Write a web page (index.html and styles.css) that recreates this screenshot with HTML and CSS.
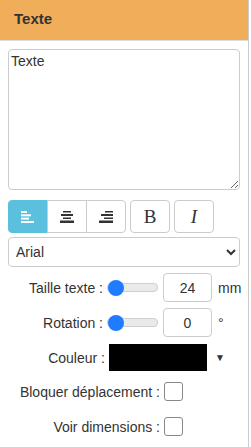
FILE: index.html
```html
<!DOCTYPE html>
<html lang="fr">
<head>
    <meta charset="UTF-8">
    <meta name="viewport" content="width=device-width, initial-scale=1.0">
    <title>Texte</title>
    <link rel="stylesheet" href="styles.css">
</head>
<body>
    <div class="panel">
        <div class="panel-heading">Texte</div>
        <div class="panel-body">
            <textarea class="text-input">Texte</textarea>

            <div class="toolbar">
                <div class="btn-group">
                    <button class="btn active" title="Gauche">
                        <svg width="14" height="12" viewBox="0 0 14 12">
                            <rect x="0" y="0" width="6" height="2" fill="#fff"/>
                            <rect x="0" y="3.3" width="10" height="2" fill="#fff"/>
                            <rect x="0" y="6.6" width="8" height="2" fill="#fff"/>
                            <rect x="0" y="10" width="13" height="2" fill="#fff"/>
                        </svg>
                    </button>
                    <button class="btn" title="Centre">
                        <svg width="14" height="12" viewBox="0 0 14 12">
                            <rect x="3" y="0" width="8" height="1.5" fill="#333"/>
                            <rect x="1" y="3" width="12" height="2" fill="#333"/>
                            <rect x="3" y="6.5" width="8" height="1.5" fill="#333"/>
                            <rect x="0" y="9.5" width="14" height="2.5" fill="#333"/>
                        </svg>
                    </button>
                    <button class="btn" title="Droite">
                        <svg width="14" height="12" viewBox="0 0 14 12">
                            <rect x="6" y="0" width="8" height="1.5" fill="#333"/>
                            <rect x="2" y="3" width="12" height="2" fill="#333"/>
                            <rect x="5" y="6.5" width="9" height="1.5" fill="#333"/>
                            <rect x="0" y="9.5" width="14" height="2.5" fill="#333"/>
                        </svg>
                    </button>
                </div>
                <button class="btn btn-font bold">B</button>
                <button class="btn btn-font italic">I</button>
            </div>

            <select class="font-select">
                <option>Arial</option>
                <option>Times New Roman</option>
                <option>Courier New</option>
            </select>

            <div class="row">
                <label>Taille texte :</label>
                <input type="range" class="slider" min="0" max="200" value="0">
                <input type="number" class="num" value="24">
                <span class="unit">mm</span>
            </div>
            <div class="row">
                <label>Rotation :</label>
                <input type="range" class="slider" min="0" max="360" value="0">
                <input type="number" class="num" value="0">
                <span class="unit">°</span>
            </div>
            <div class="row">
                <label>Couleur :</label>
                <div class="color-box"></div>
                <span class="unit arrow">▼</span>
            </div>
            <div class="row check-row">
                <label>Bloquer déplacement :</label>
                <input type="checkbox" class="check">
            </div>
            <div class="row check-row">
                <label>Voir dimensions :</label>
                <input type="checkbox" class="check">
            </div>
        </div>
    </div>
</body>
</html>
```

FILE: styles.css
```css
body {
    margin: 0;
    font-family: 'Liberation Sans', Arial, sans-serif;
    font-size: 14px;
    color: #333;
    background: white;
}

.panel {
    width: 248px;
    height: 447px;
    border-right: 1px solid #ccc;
}

.panel-heading {
    background: #f0ad5a;
    height: 40px;
    line-height: 38px;
    padding-left: 14px;
    font-size: 15px;
    font-weight: bold;
    color: #333;
    border-bottom: 1px solid #ddd;
}

.panel-body {
    padding: 8px 8px 0 8px;
}

.text-input {
    display: block;
    box-sizing: border-box;
    width: 232px;
    height: 141px;
    border: 1px solid #ccc;
    border-radius: 4px;
    padding: 3px 2px;
    font-family: 'Liberation Sans', Arial, sans-serif;
    font-size: 14px;
    color: #333;
    margin: 0;
}

.toolbar {
    display: flex;
    gap: 4px;
    margin-top: 10px;
}

.btn-group {
    display: flex;
}

.btn {
    box-sizing: border-box;
    width: 40px;
    height: 33px;
    border: 1px solid #ccc;
    border-radius: 4px;
    background: white;
    display: flex;
    align-items: center;
    justify-content: center;
    padding: 0;
    color: #333;
}

.btn-group .btn {
    border-radius: 0;
    margin-left: -1px;
}

.btn-group .btn:first-child {
    margin-left: 0;
    border-radius: 4px 0 0 4px;
}

.btn-group .btn:last-child {
    border-radius: 0 4px 4px 0;
}

.btn.active {
    background: #5bc0de;
    border-color: #5bc0de;
}

.btn-font {
    font-family: 'Liberation Serif', 'Times New Roman', serif;
    font-size: 19px;
}

.btn-font.italic {
    font-style: italic;
}

.font-select {
    display: block;
    box-sizing: border-box;
    width: 232px;
    height: 30px;
    margin-top: 4px;
    border: 1px solid #ccc;
    border-radius: 4px;
    background: white;
    font-family: 'Liberation Sans', Arial, sans-serif;
    font-size: 14px;
    color: #333;
    padding-left: 3px;
}

.row {
    display: flex;
    align-items: center;
    justify-content: flex-end;
    height: 29px;
    margin-top: 6px;
}

.row label {
    margin-right: 4px;
}

.slider {
    -webkit-appearance: none;
    appearance: none;
    width: 49px;
    height: 7px;
    margin: 0 5px 0 0;
    background: #eaeaea;
    border: 1px solid #cfcfcf;
    border-radius: 4px;
}

.slider::-webkit-slider-thumb {
    -webkit-appearance: none;
    width: 16px;
    height: 16px;
    border-radius: 50%;
    background: #1f7bff;
    border: none;
}

.num {
    box-sizing: border-box;
    width: 49px;
    height: 29px;
    border: 1px solid #ccc;
    border-radius: 4px;
    text-align: center;
    font-family: 'Liberation Sans', Arial, sans-serif;
    font-size: 14px;
    color: #333;
    margin: 0;
    -moz-appearance: textfield;
}

.num::-webkit-inner-spin-button,
.num::-webkit-outer-spin-button {
    -webkit-appearance: none;
    margin: 0;
}

.unit {
    width: 28px;
    padding-left: 6px;
    box-sizing: border-box;
}

.arrow {
    width: 33px;
    font-size: 10px;
    padding-left: 8px;
}

.color-box {
    width: 98px;
    height: 27px;
    background: black;
}

.check-row {
    height: 19px;
    margin-top: 10px;
    padding-right: 57px;
}

.check-row + .check-row {
    margin-top: 16px;
}

.check {
    -webkit-appearance: none;
    appearance: none;
    width: 19px;
    height: 19px;
    margin: 0;
    border: 1px solid #888;
    border-radius: 3px;
    background: white;
}
```
